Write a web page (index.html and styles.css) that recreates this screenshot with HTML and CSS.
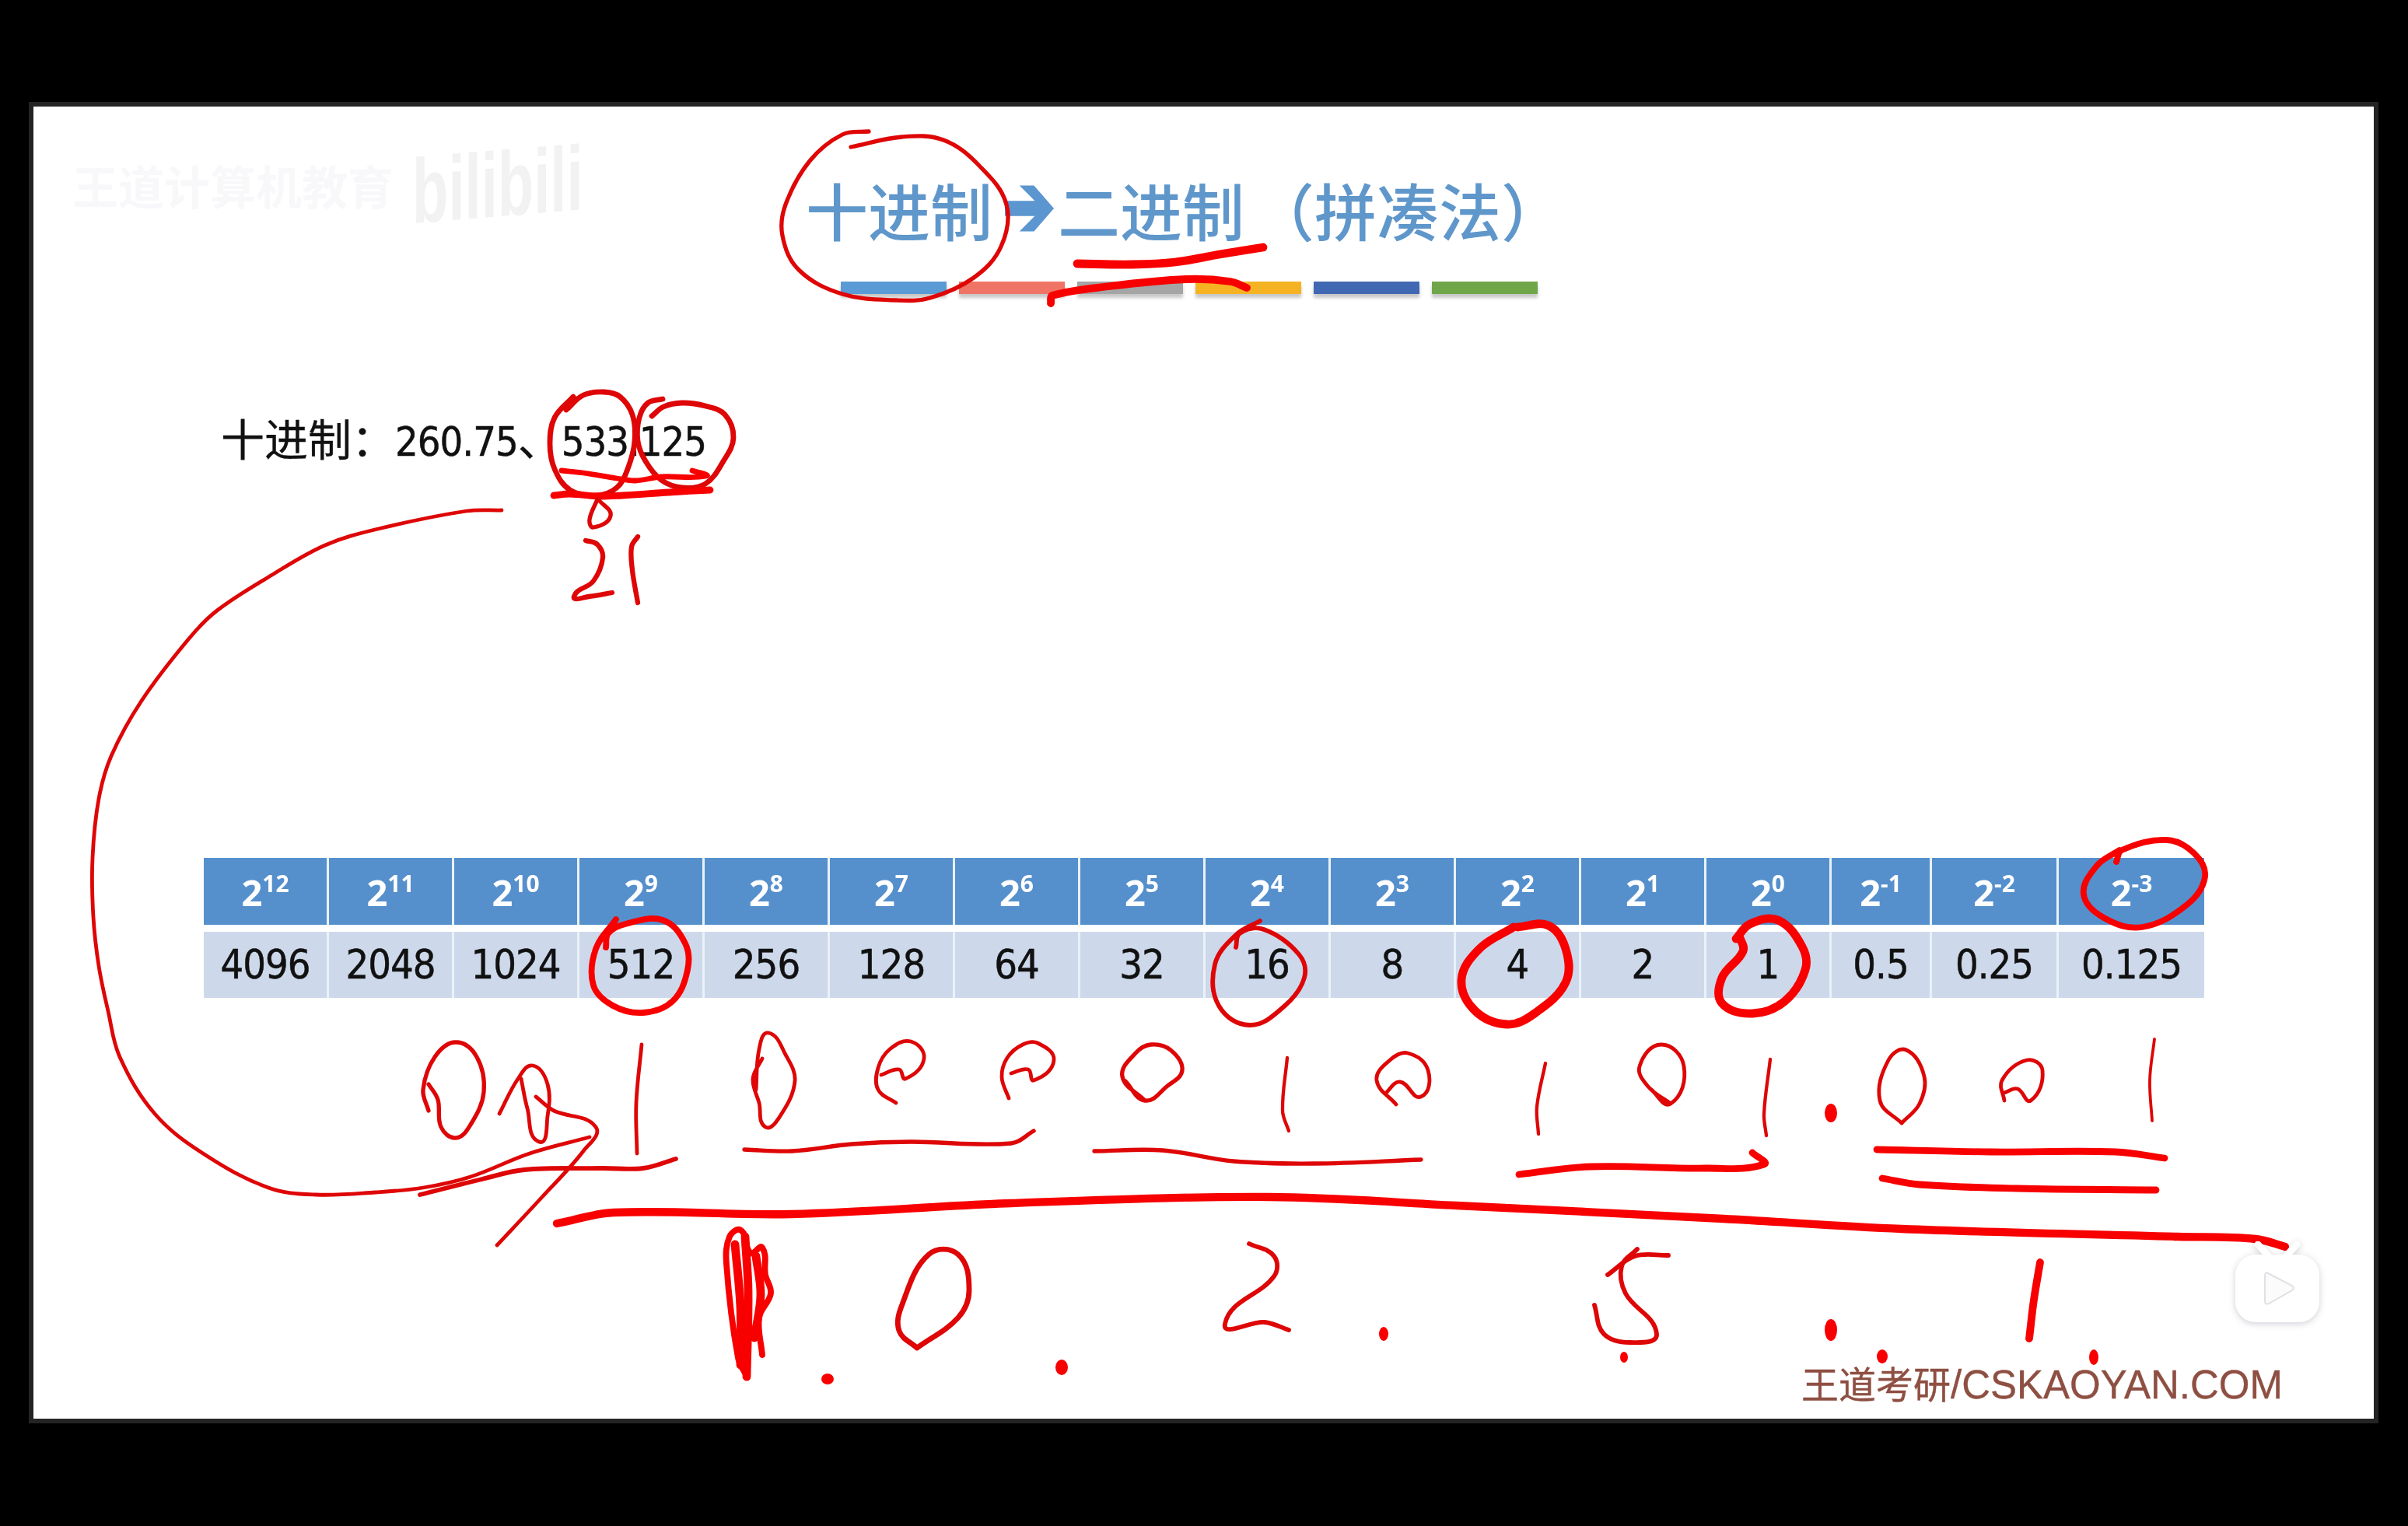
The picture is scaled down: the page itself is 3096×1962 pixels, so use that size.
FILE: index.html
```html
<!DOCTYPE html>
<html lang="zh-CN">
<head>
<meta charset="utf-8">
<title>十进制→二进制（拼凑法）</title>
<link rel="stylesheet" href="styles.css">
</head>
<body>
<main class="slide">
  <h1 class="title">
    <span>十进制</span>
    <svg class="title-arrow" viewBox="0 0 64 60" aria-hidden="true"><path d="M0 20H39L19 0H38L64 30L38 60H19L39 40H0Z"/></svg>
    <span>二进制</span><span class="title-tail">（拼凑法）</span>
  </h1>
  <div class="bars">
    <i class="bar bar-blue"></i><i class="bar bar-coral"></i><i class="bar bar-gray"></i><i class="bar bar-amber"></i><i class="bar bar-navy"></i><i class="bar bar-green"></i>
  </div>
  <p class="numbers"><span class="cjk">十进制：</span>260.75<span class="cjk">、</span>533.125</p>
  <div class="powers">
    <div class="hd">2<sup>12</sup></div><div class="hd">2<sup>11</sup></div><div class="hd">2<sup>10</sup></div><div class="hd">2<sup>9</sup></div><div class="hd">2<sup>8</sup></div><div class="hd">2<sup>7</sup></div><div class="hd">2<sup>6</sup></div><div class="hd">2<sup>5</sup></div><div class="hd">2<sup>4</sup></div><div class="hd">2<sup>3</sup></div><div class="hd">2<sup>2</sup></div><div class="hd">2<sup>1</sup></div><div class="hd">2<sup>0</sup></div><div class="hd">2<sup>-1</sup></div><div class="hd">2<sup>-2</sup></div><div class="hd">2<sup>-3</sup></div>
    <div class="val">4096</div><div class="val">2048</div><div class="val">1024</div><div class="val">512</div><div class="val">256</div><div class="val">128</div><div class="val">64</div><div class="val">32</div><div class="val">16</div><div class="val">8</div><div class="val">4</div><div class="val">2</div><div class="val">1</div><div class="val">0.5</div><div class="val">0.25</div><div class="val">0.125</div>
  </div>
  <p class="credit"><span class="credit-cjk">王道考研</span>/CSKAOYAN.COM</p>
  <div class="watermark"><span class="wm-name">王道计算机教育</span><span class="wm-logo">bilibili</span></div>
</main>
<svg id="ink" class="ink" viewBox="0 0 3096 1962" aria-hidden="true"></svg>
<svg class="badge" viewBox="0 0 120 120" aria-hidden="true">
  <path class="badge-ear" d="M33 4L46 18M83 4L70 18"/>
  <rect class="badge-body" x="4" y="17" width="108" height="87" rx="26"/>
  <path class="badge-play" d="M46 41L77 57Q81 60 77 63L47 80Q42 82 42 77V45Q42 39 46 41Z"/>
</svg>
<script src="ink.js"></script>
</body>
</html>
```
FILE: styles.css
```css
* { box-sizing: border-box; }
html, body { margin: 0; padding: 0; }
body {
  position: relative;
  width: 3096px;
  height: 1962px;
  overflow: hidden;
  background: #000;
  padding: 131px 0 0 37px;
}
.slide {
  position: relative;
  width: 3021px;
  height: 1699px;
  border: 6px solid #242424;
  background: #fff;
  display: flex;
  flex-direction: column;
  filter: blur(0.6px);
}
.title {
  margin: 0;
  padding: 91px 0 0 993px;
  display: flex;
  align-items: center;
  font: 500 80px/80px "Noto Sans CJK SC", sans-serif;
  color: #5f97cb;
}
.title-arrow { width: 63px; height: 60px; margin: 0 5px 0 16px; fill: #5b96d0; }
.title-tail { margin-left: 10px; }
.bars { display: flex; gap: 16px; margin: 54px 0 0 1038px; }
.bar { display: block; width: 136px; height: 16px; box-shadow: 0 5px 4px rgba(0,0,0,.22); }
.bar-blue { background: #5b9bd5; }
.bar-coral { background: #f07465; }
.bar-gray { background: #a5a5a5; }
.bar-amber { background: #f5b323; }
.bar-navy { background: #4168b3; }
.bar-green { background: #6fa64a; }
.numbers {
  margin: 154px 0 0 241px;
  font: 400 52px/60px "DejaVu Sans Condensed", "DejaVu Sans", sans-serif;
  letter-spacing: -1px;
  -webkit-text-stroke: 0.5px #111;
  color: #111;
}
.cjk { font: 400 56px/60px "Noto Sans CJK SC", sans-serif; letter-spacing: 0; -webkit-text-stroke: 0.3px #111; }
.powers {
  display: grid;
  grid-template-columns: repeat(13, 161px) 129px 163px 187px;
  grid-template-rows: 86px 85px;
  row-gap: 9px;
  margin: 505px 0 0 219px;
}
.hd, .val { text-align: center; border-right: 3px solid #eaf1f8; }
.hd:nth-child(16), .val:nth-child(32) { border-right: 0; }
.hd {
  background: #5590cd;
  color: #fff;
  font: 700 47px/88px "Noto Sans", sans-serif;
}
.hd sup { font-size: 30px; line-height: 0; vertical-align: 18px; }
.val {
  background: #cdd9ea;
  color: #111;
  font: 400 52px/85px "DejaVu Sans Condensed", "DejaVu Sans", sans-serif;
  letter-spacing: -1px;
  -webkit-text-stroke: 0.5px #111;
}
.credit {
  margin: 464px 117px 0 0;
  align-self: flex-end;
  font: 400 51px/60px "Liberation Sans", sans-serif;
  color: #8e4f42;
  -webkit-text-stroke: 0.4px #8e4f42;
}
.credit-cjk { font: 400 48px/60px "Noto Sans CJK SC", sans-serif; }
.watermark {
  position: absolute;
  left: 50px;
  top: 66px;
  display: flex;
  align-items: center;
  gap: 24px;
  color: #f8f8fa;
}
.wm-name { font: 700 59px/70px "Noto Sans CJK SC", sans-serif; }
.wm-logo {
  display: block;
  font: 700 76px/70px "Liberation Sans", sans-serif;
  color: #f2f2f3;
  transform: scale(1, 1.55) skewY(-3deg);
}
.ink {
  position: absolute;
  left: 0;
  top: 0;
  width: 3096px;
  height: 1962px;
  fill: none;
  stroke-linecap: round;
  stroke-linejoin: round;
  filter: blur(0.7px);
}
.badge { position: absolute; left: 2870px; top: 1596px; width: 120px; height: 120px; filter: drop-shadow(0 2px 4px rgba(20,20,60,.2)); }
.badge-body { fill: #fff; }
.badge-ear { fill: none; stroke: #fff; stroke-width: 9; stroke-linecap: round; }
.badge-play { fill: #fbfbfc; stroke: #dfe1e5; stroke-width: 2; }
```
FILE: ink.js
```js
// Handwritten annotation strokes: [width, colour, points...] in page pixels.
var THIN = "#de0606", RED = "#f80000";
var strokes = [
  // title circle
  [4.5, THIN, 1117,169, 1083,173, 1041,207, 1010,263, 1006,303, 1027,347, 1083,378, 1153,386, 1196,383, 1252,357, 1287,317, 1294,263, 1259,213, 1213,180, 1160,176, 1094,189],
  [10, RED, 1385,339, 1455,340, 1511,337, 1568,327, 1624,318],
  [9, RED, 1351,390, 1353,380, 1427,368, 1525,359, 1582,362, 1603,370],
  // 533.125 marks
  [6, THIN, 728,527, 750,508, 777,504, 797,510, 813,533, 816,567, 807,603, 793,627, 767,637, 733,630, 713,603, 707,570, 713,537, 737,510],
  [6, THIN, 852,513, 833,518, 822,537, 820,567, 830,593, 850,617, 877,627, 907,622, 930,593, 943,563, 932,533, 907,522, 877,518, 853,523, 838,535],
  [6, RED, 722,605, 750,608, 793,615, 817,618, 850,613, 908,612, 890,605],
  [8, RED, 712,637, 733,635, 767,638, 800,637, 860,633, 913,630],
  [4.5, THIN, 768,642, 758,668, 763,678, 785,663, 770,643],
  [5.5, THIN, 753,695, 768,700, 775,717, 763,747, 738,767, 757,767, 787,762],
  [5.5, THIN, 820,690, 812,703, 813,733, 820,775],
  // long return arrow
  [4, THIN, 645,656, 600,657, 486,680, 418,701, 350,739, 279,785, 243,821, 182,901, 143,972, 127,1027, 119,1103, 120,1179, 127,1242, 139,1300, 154,1359, 199,1432, 261,1483, 345,1527, 406,1536, 483,1533, 544,1527, 605,1513, 681,1483, 758,1462],
  [5, THIN, 540,1536, 620,1516, 674,1504, 773,1502, 827,1502, 869,1490],
  [4, THIN, 689,1410, 712,1428, 766,1449, 750,1480, 697,1539, 639,1601],
  // table circles
  [7, RED, 779,1218, 782,1200, 804,1188, 852,1183, 881,1213, 884,1247, 865,1287, 827,1302, 788,1293, 763,1267, 766,1220, 792,1182],
  [5, THIN, 1589,1218, 1594,1200, 1625,1195, 1670,1227, 1677,1257, 1652,1293, 1607,1318, 1567,1293, 1562,1240, 1589,1202, 1620,1184],
  [10, RED, 1951,1192, 1991,1190, 2013,1220, 2013,1263, 1973,1303, 1938,1317, 1897,1300, 1879,1260, 1902,1220, 1946,1192],
  [10, RED, 2232,1207, 2250,1188, 2286,1183, 2317,1217, 2321,1247, 2295,1287, 2254,1303, 2214,1290, 2214,1257, 2241,1223, 2236,1203],
  [7, RED, 2721,1108, 2728,1093, 2786,1080, 2821,1097, 2835,1127, 2812,1163, 2754,1192, 2705,1180, 2679,1150, 2696,1113, 2725,1093],
  // binary digits
  [4.5, THIN, 551,1428, 544,1401, 559,1359, 586,1340, 613,1359, 622,1404, 605,1446, 586,1463, 567,1449, 563,1414, 551,1394],
  [4, THIN, 642,1432, 666,1387, 685,1370, 704,1394, 704,1435, 693,1468, 678,1425, 670,1387],
  [4, THIN, 825,1343, 818,1418, 819,1483],
  [4, THIN, 972,1401, 976,1349, 988,1328, 1010,1356, 1022,1390, 1003,1435, 984,1449, 976,1418, 968,1387, 980,1361],
  [4, THIN, 1152,1418, 1129,1401, 1129,1373, 1144,1349, 1171,1339, 1188,1361, 1164,1387, 1156,1375, 1133,1382],
  [4, THIN, 1297,1412, 1288,1385, 1295,1360, 1315,1343, 1334,1341, 1355,1363, 1329,1389, 1322,1375, 1300,1380],
  [4.5, THIN, 1472,1415, 1443,1384, 1460,1354, 1480,1343, 1505,1350, 1520,1376, 1500,1397, 1472,1415, 1447,1390],
  [3.5, THIN, 1655,1360, 1649,1428, 1657,1454],
  [4, THIN, 1795,1420, 1770,1389, 1787,1363, 1810,1354, 1836,1376, 1827,1410, 1800,1391, 1781,1406],
  [3.5, THIN, 1987,1367, 1976,1423, 1978,1458],
  [4, THIN, 2148,1419, 2119,1397, 2108,1371, 2136,1343, 2165,1371, 2148,1419, 2122,1400],
  [3.5, THIN, 2276,1362, 2268,1432, 2271,1460],
  [4, THIN, 2445,1444, 2417,1415, 2428,1363, 2451,1350, 2474,1384, 2468,1419, 2445,1444],
  [4, THIN, 2577,1415, 2574,1389, 2606,1363, 2626,1376, 2611,1415, 2594,1400, 2577,1405],
  [3, THIN, 2770,1336, 2764,1389, 2767,1441],
  // underlines
  [4.5, THIN, 957,1478, 1018,1480, 1095,1471, 1171,1468, 1300,1470, 1329,1454],
  [4.5, THIN, 1407,1480, 1495,1479, 1586,1493, 1689,1496, 1827,1491],
  [8, RED, 1953,1510, 2045,1500, 2193,1502, 2268,1497, 2253,1482],
  [8, RED, 2413,1478, 2560,1481, 2720,1481, 2783,1489],
  [8, RED, 2420,1515, 2468,1523, 2594,1528, 2772,1530],
  [9.5, RED, 716,1573, 789,1559, 1018,1561, 1300,1547, 1632,1539, 1873,1550, 2216,1567, 2445,1580, 2800,1590, 2900,1593, 2938,1603],
  // answer digits
  [7, RED, 961,1771, 949,1746, 934,1625, 938,1590, 953,1582, 965,1611, 980,1604, 984,1639, 991,1663, 976,1694, 980,1742],
  [10, RED, 945,1600, 952,1680, 952,1755],
  [10, RED, 958,1590, 962,1660, 960,1770],
  [10, RED, 972,1615, 978,1665, 970,1720],
  [6, THIN, 1179,1733, 1156,1711, 1160,1677, 1194,1613, 1232,1613, 1246,1659, 1232,1694, 1179,1733],
  [5, THIN, 1606,1599, 1638,1615, 1638,1641, 1575,1702, 1626,1700, 1657,1710],
  [5, THIN, 2145,1614, 2102,1615, 2067,1639],
  [5, THIN, 2105,1606, 2085,1628, 2090,1663, 2130,1715, 2096,1726, 2062,1715, 2050,1678],
  [9, RED, 2623,1623, 2615,1671, 2609,1721]
];
var dots = [
  [2354,1431,8,12], [1064,1773,8,7], [1365,1758,8,10], [1779,1715,6,9],
  [2088,1745,5,7], [2354,1710,8,14], [2420,1744,7,9], [2692,1745,6,10]
];
var NS = "http://www.w3.org/2000/svg";
var svg = document.getElementById("ink");
function smooth(p) {
  var n = p.length / 2, k = 0.36;
  function at(i) {
    i = Math.max(0, Math.min(n - 1, i));
    return [p[i * 2], p[i * 2 + 1]];
  }
  // unit tangent at point i, from its two neighbours
  function tan(i) {
    var a = at(i - 1), c = at(i + 1), x = c[0] - a[0], y = c[1] - a[1], l = Math.hypot(x, y) || 1;
    return [x / l, y / l];
  }
  var d = "M" + p[0] + " " + p[1];
  for (var i = 0; i < n - 1; i++) {
    var b = at(i), c = at(i + 1), s = Math.hypot(c[0] - b[0], c[1] - b[1]) * k, t0 = tan(i), t1 = tan(i + 1);
    d += "C" + (b[0] + t0[0] * s).toFixed(1) + " " + (b[1] + t0[1] * s).toFixed(1) +
      " " + (c[0] - t1[0] * s).toFixed(1) + " " + (c[1] - t1[1] * s).toFixed(1) +
      " " + c[0] + " " + c[1];
  }
  return d;
}
strokes.forEach(function (s) {
  var path = document.createElementNS(NS, "path");
  path.setAttribute("d", smooth(s.slice(2)));
  path.setAttribute("stroke", s[1]);
  path.setAttribute("stroke-width", s[0] + 0.8);
  svg.appendChild(path);
});
dots.forEach(function (o) {
  var el = document.createElementNS(NS, "ellipse");
  el.setAttribute("cx", o[0]); el.setAttribute("cy", o[1]);
  el.setAttribute("rx", o[2]); el.setAttribute("ry", o[3]);
  el.setAttribute("fill", RED);
  svg.appendChild(el);
});
```
